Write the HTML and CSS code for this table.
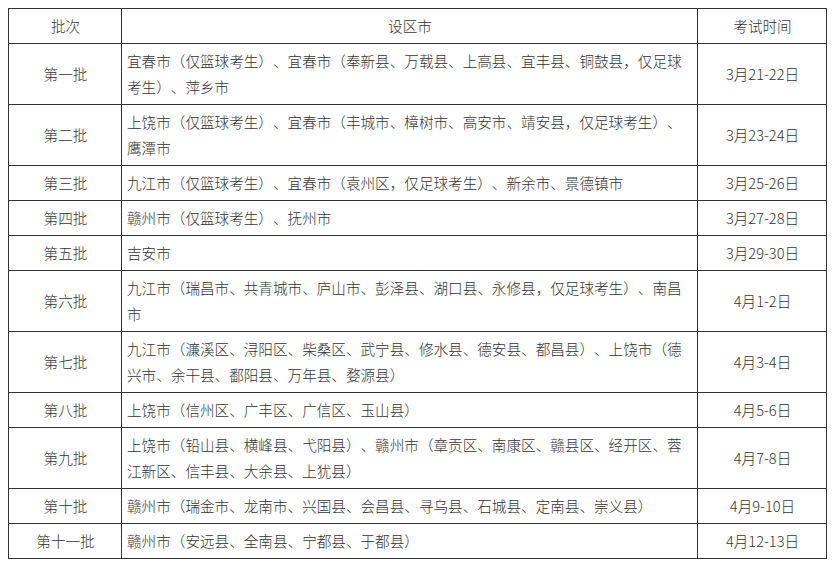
FILE: index.html
```html
<!DOCTYPE html>
<html lang="zh-CN">
<head>
<meta charset="utf-8">
<title>考试时间安排</title>
<link rel="stylesheet" href="styles.css">
</head>
<body>
<table class="schedule">
  <colgroup>
    <col class="col-batch">
    <col class="col-city">
    <col class="col-date">
  </colgroup>
  <thead>
    <tr><th>批次</th><th>设区市</th><th>考试时间</th></tr>
  </thead>
  <tbody>
    <tr><td class="batch">第一批</td><td class="city">宜春市（仅篮球考生）、宜春市（奉新县、万载县、上高县、宜丰县、铜鼓县，仅足球考生）、萍乡市</td><td class="date">3月21-22日</td></tr>
    <tr><td class="batch">第二批</td><td class="city">上饶市（仅篮球考生）、宜春市（丰城市、樟树市、高安市、靖安县，仅足球考生）、鹰潭市</td><td class="date">3月23-24日</td></tr>
    <tr><td class="batch">第三批</td><td class="city">九江市（仅篮球考生）、宜春市（袁州区，仅足球考生）、新余市、景德镇市</td><td class="date">3月25-26日</td></tr>
    <tr><td class="batch">第四批</td><td class="city">赣州市（仅篮球考生）、抚州市</td><td class="date">3月27-28日</td></tr>
    <tr><td class="batch">第五批</td><td class="city">吉安市</td><td class="date">3月29-30日</td></tr>
    <tr><td class="batch">第六批</td><td class="city">九江市（瑞昌市、共青城市、庐山市、彭泽县、湖口县、永修县，仅足球考生）、南昌市</td><td class="date">4月1-2日</td></tr>
    <tr><td class="batch">第七批</td><td class="city">九江市（濂溪区、浔阳区、柴桑区、武宁县、修水县、德安县、都昌县）、上饶市（德兴市、余干县、鄱阳县、万年县、婺源县）</td><td class="date">4月3-4日</td></tr>
    <tr><td class="batch">第八批</td><td class="city">上饶市（信州区、广丰区、广信区、玉山县）</td><td class="date">4月5-6日</td></tr>
    <tr><td class="batch">第九批</td><td class="city">上饶市（铅山县、横峰县、弋阳县）、赣州市（章贡区、南康区、赣县区、经开区、蓉江新区、信丰县、大余县、上犹县）</td><td class="date">4月7-8日</td></tr>
    <tr><td class="batch">第十批</td><td class="city">赣州市（瑞金市、龙南市、兴国县、会昌县、寻乌县、石城县、定南县、崇义县）</td><td class="date">4月9-10日</td></tr>
    <tr><td class="batch">第十一批</td><td class="city">赣州市（安远县、全南县、宁都县、于都县）</td><td class="date">4月12-13日</td></tr>
  </tbody>
</table>
</body>
</html>
```

FILE: styles.css
```css
html, body {
  background: #ffffff;
}

body {
  margin: 8px;
  font-family: "Noto Sans CJK SC", "Noto Sans", sans-serif;
  font-size: 14.6px;
  font-weight: 300;
  color: #333333;
  text-spacing-trim: space-all;
}

.schedule {
  border-collapse: collapse;
  table-layout: fixed;
  width: 818px;
}

.col-batch { width: 113px; }
.col-city { width: 576px; }
.col-date { width: 129px; }

.schedule th,
.schedule td {
  border: 1px solid #333333;
  padding: 4px 4px 4px 5px;
  line-height: 26px;
  vertical-align: middle;
  font-weight: 300;
  text-align: center;
}

.schedule td.city {
  text-align: left;
}
```
